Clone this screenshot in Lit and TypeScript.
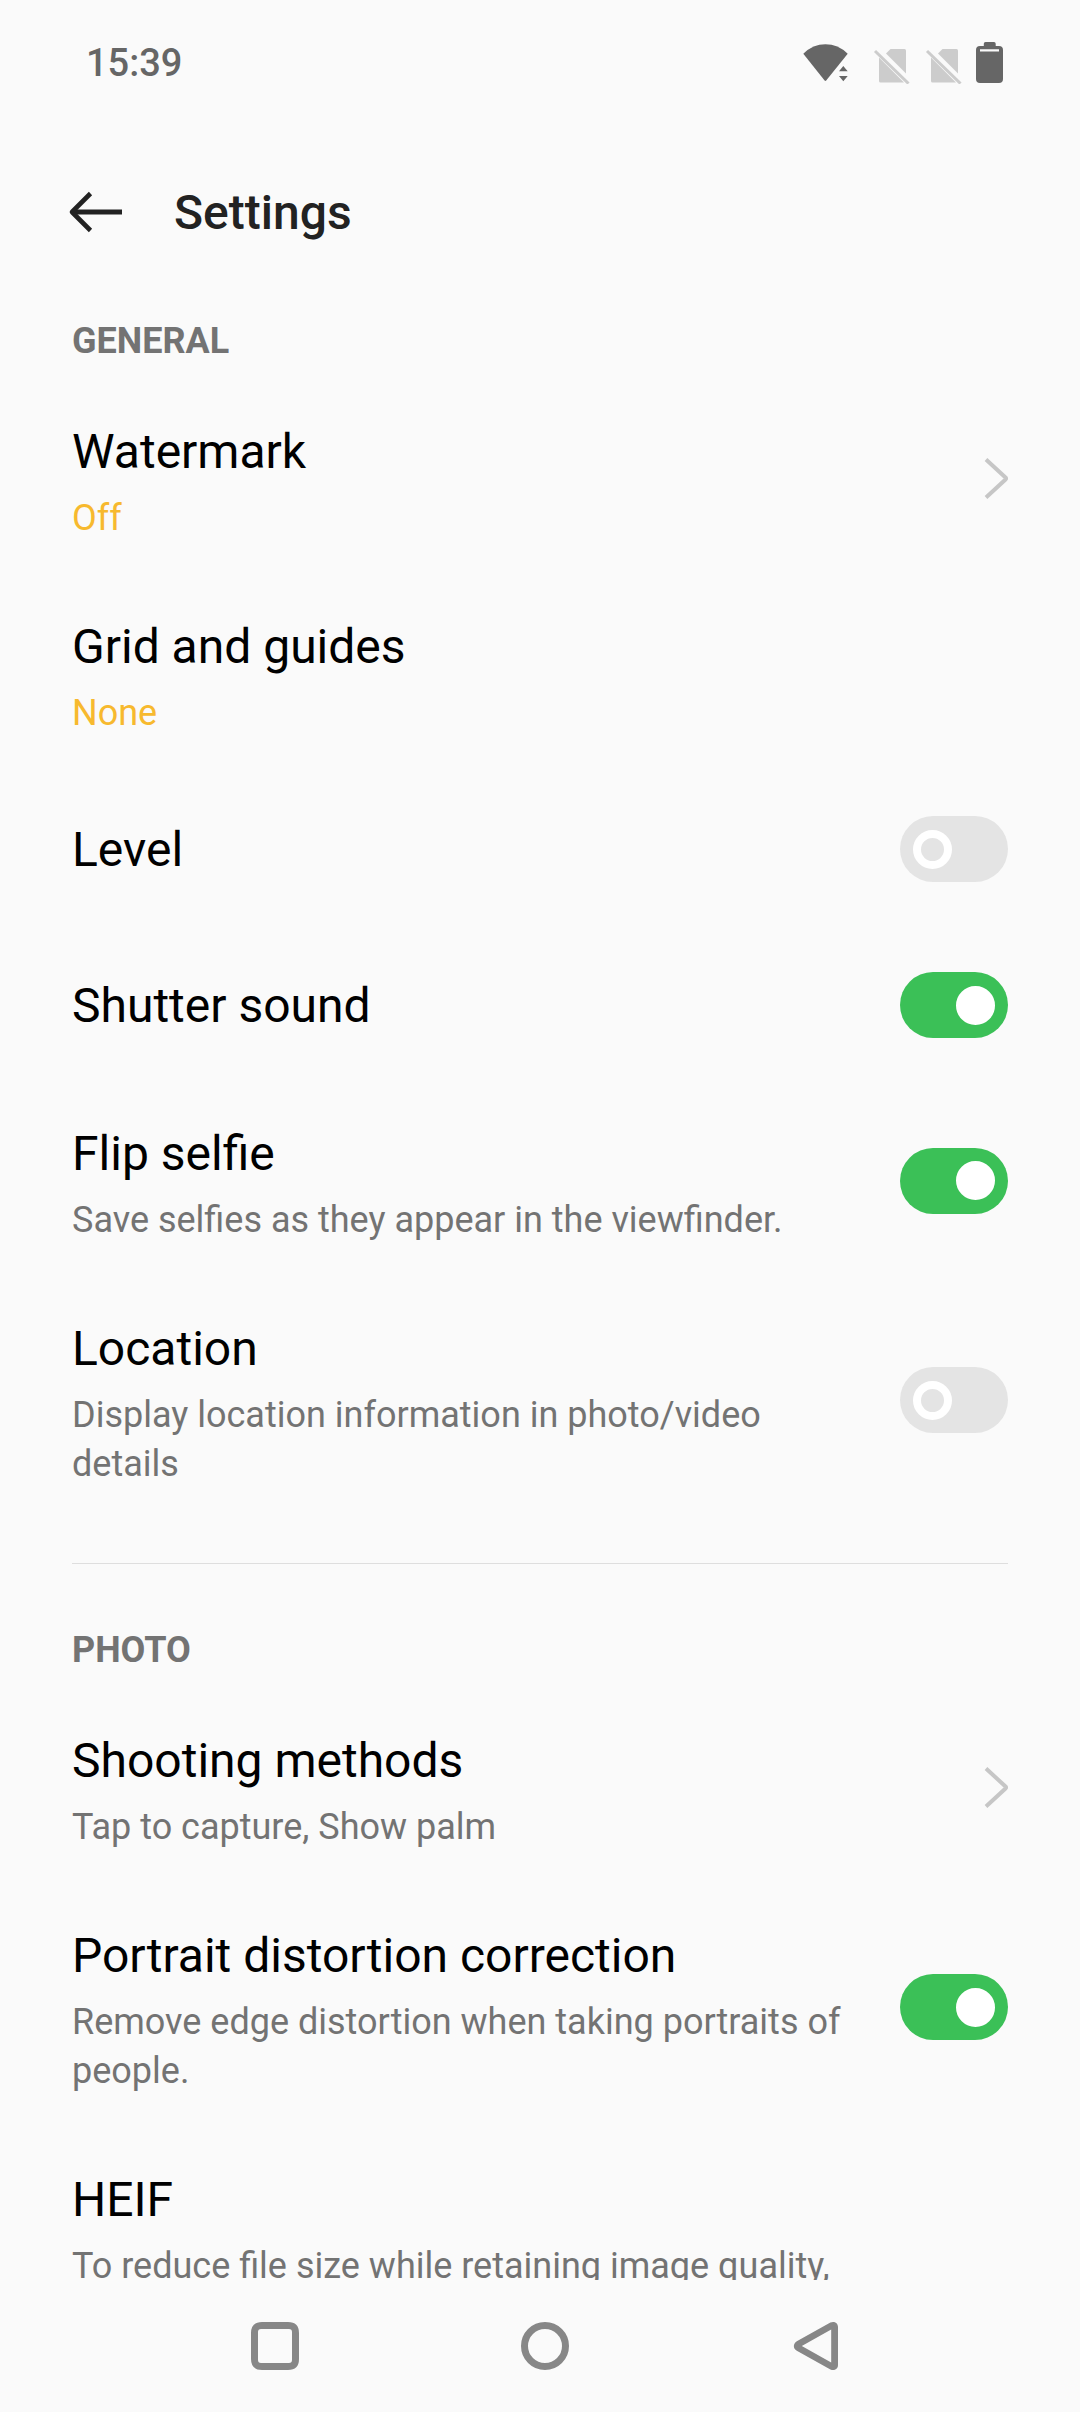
import { LitElement, html, css, svg, nothing } from "lit";
import { customElement, state } from "lit/decorators.js";

interface Item {
  id: string;
  title: string;
  note?: string;
  value?: string;
  kind: "link" | "menu" | "switch";
  on?: boolean;
}

interface Group {
  title: string;
  items: Item[];
}

const GROUPS: Group[] = [
  {
    title: "GENERAL",
    items: [
      { id: "watermark", title: "Watermark", value: "Off", kind: "link" },
      { id: "grid", title: "Grid and guides", value: "None", kind: "menu" },
      { id: "level", title: "Level", kind: "switch", on: false },
      { id: "shutter", title: "Shutter sound", kind: "switch", on: true },
      {
        id: "flip",
        title: "Flip selfie",
        note: "Save selfies as they appear in the viewfinder.",
        kind: "switch",
        on: true,
      },
      {
        id: "location",
        title: "Location",
        note: "Display location information in photo/video details",
        kind: "switch",
        on: false,
      },
    ],
  },
  {
    title: "PHOTO",
    items: [
      { id: "shooting", title: "Shooting methods", note: "Tap to capture, Show palm", kind: "link" },
      {
        id: "portrait",
        title: "Portrait distortion correction",
        note: "Remove edge distortion when taking portraits of people.",
        kind: "switch",
        on: true,
      },
      {
        id: "heif",
        title: "HEIF",
        note: "To reduce file size while retaining image quality,",
        kind: "menu",
      },
    ],
  },
];

// No-SIM glyph: card with a cut corner, crossed by a diagonal bar.
const sim = html`<svg class="icon sim" width="38" height="42" viewBox="0 0 38 42" aria-hidden="true">
  ${svg`
    <path d="M14 11.5 L18.5 7 H32.5 Q34 7 34 8.5 V31.5 Z" />
    <path d="M7 15.5 L32 40.5 H8.5 Q7 40.5 7 39 Z" />
    <path d="M3 9 L36.5 41.5" class="slash" />
  `}
</svg>`;

@customElement("app-root")
export class AppRoot extends LitElement {
  static styles = css`
    :host {
      display: flex;
      flex-direction: column;
      height: 100vh;
      background: #fafafa;
      color: #000;
      font-family: Roboto, "Liberation Sans", sans-serif;
      font-size: 36px;
      line-height: 49px;
    }
    button {
      border: 0;
      margin: 0;
      padding: 0;
      background: none;
      font: inherit;
      color: inherit;
      text-align: left;
      cursor: pointer;
    }
    svg {
      display: block;
      flex: none;
    }
    .status {
      display: flex;
      align-items: center;
      justify-content: space-between;
      height: 126px;
      padding: 0 77px 0 86px;
      color: #666;
    }
    .time {
      font-size: 38px;
      font-weight: 500;
    }
    .icons {
      display: flex;
      gap: 14px;
      fill: #666;
    }
    .sim {
      fill: #ccc;
    }
    .slash {
      fill: none;
      stroke: #ccc;
      stroke-width: 3;
    }
    .header {
      display: flex;
      align-items: center;
      gap: 48px;
      height: 171px;
      padding: 0 72px 0 66px;
      color: #222;
    }
    .line {
      fill: none;
      stroke: currentColor;
    }
    h1 {
      margin: 0;
      padding-top: 2px;
      font-size: 48px;
      font-weight: 500;
      line-height: 56px;
    }
    .list {
      flex: 1;
      min-height: 0;
      overflow-y: auto;
      scrollbar-width: none;
      padding: 20px 72px 0;
    }
    section + section {
      margin-top: 41px;
      padding-top: 62px;
      border-top: 1px solid #dedede;
    }
    h2 {
      margin: 0 0 15px;
      font-size: 36px;
      font-weight: 700;
      line-height: 49px;
      color: #737373;
    }
    .row {
      display: flex;
      align-items: center;
      gap: 45px;
      width: 100%;
      min-height: 156px;
      cursor: pointer;
    }
    .text {
      display: flex;
      flex: 1;
      flex-direction: column;
      gap: 14px;
      padding-top: 2px;
    }
    .text.double {
      padding: 43px 0 33px;
    }
    .title {
      font-size: 48px;
      line-height: 56px;
    }
    .note {
      color: #737373;
    }
    .value {
      color: #f7b92e;
    }
    .chevron {
      color: #c6c6c6;
    }
    .switch {
      appearance: none;
      display: flex;
      align-items: center;
      flex: none;
      box-sizing: border-box;
      width: 108px;
      height: 66px;
      margin: 0;
      padding: 0 13px;
      border-radius: 33px;
      background: #e4e4e4;
      cursor: pointer;
    }
    .switch::before {
      content: "";
      box-sizing: border-box;
      width: 39px;
      height: 39px;
      border: 8px solid #fff;
      border-radius: 50%;
    }
    .switch:checked {
      justify-content: flex-end;
      background: #3bc057;
    }
    .switch:checked::before {
      background: #fff;
    }
    .nav {
      display: flex;
      height: 132px;
      padding: 0 130px 0 140px;
      color: #878787;
    }
    .nav button {
      display: flex;
      flex: 1;
      align-items: center;
      justify-content: center;
    }
  `;

  @state() private on: Record<string, boolean> = Object.fromEntries(
    GROUPS.flatMap((g) => g.items).map((i) => [i.id, !!i.on]),
  );

  private toggle(id: string, e: Event) {
    this.on = { ...this.on, [id]: (e.target as HTMLInputElement).checked };
  }

  private renderText(item: Item) {
    const sub = item.note ?? item.value;
    return html`<span class="text ${sub ? "double" : ""}">
      <span class="title">${item.title}</span>
      ${sub ? html`<span class=${item.value ? "value" : "note"}>${sub}</span>` : nothing}
    </span>`;
  }

  private renderItem(item: Item) {
    if (item.kind === "switch") {
      return html`<label class="row" for=${item.id}>
        ${this.renderText(item)}
        <input
          class="switch"
          type="checkbox"
          role="switch"
          id=${item.id}
          .checked=${this.on[item.id]}
          @change=${(e: Event) => this.toggle(item.id, e)}
        />
      </label>`;
    }
    return html`<button class="row" type="button">
      ${this.renderText(item)}
      ${item.kind === "link"
        ? html`<svg class="chevron" width="24" height="42" viewBox="0 0 24 42" aria-hidden="true">
            <path class="line" d="M2 1.5 L21.5 19.5 Q22.5 20.5 21.5 21.5 L2 39.5" stroke-width="4" />
          </svg>`
        : nothing}
    </button>`;
  }

  render() {
    return html`
      <div class="status">
        <span class="time">15:39</span>
        <span class="icons">
          <svg class="icon" width="55" height="42" viewBox="0 0 55 42" aria-hidden="true">
            <path d="M0.3 11.7 Q10 2.3 22.4 2.3 Q35 2.3 44.7 11.7 L23.2 38.5 Q22.4 39.4 21.6 38.5 Z" />
            <path d="M36 29.3 L40.3 24 L44.7 29.3 Z M36 34 H44.7 L40.3 39.2 Z" />
          </svg>
          ${sim} ${sim}
          <svg class="icon" width="27" height="42" viewBox="0 0 27 42" aria-hidden="true">
            <path
              fill-rule="evenodd"
              d="M9.5 0 H18 Q19.7 0 19.7 1.7 V4 H23 Q27 4 27 8 V37 Q27 41 23 41 H4 Q0 41 0 37 V8 Q0 4 4 4 H7.8 V1.7 Q7.8 0 9.5 0 Z M4 7.2 V9.4 H23 V7.2 Z"
            />
          </svg>
        </span>
      </div>
      <header class="header">
        <button type="button" aria-label="Back">
          <svg width="60" height="42" viewBox="0 0 60 42" aria-hidden="true">
            <path class="line" d="M6 21 H56" stroke-width="5" />
            <path class="line" d="M24.5 2.5 L6 21 L24.5 39.5" stroke-width="4.6" stroke-linejoin="round" />
          </svg>
        </button>
        <h1>Settings</h1>
      </header>
      <main class="list">
        ${GROUPS.map(
          (g) => html`<section>
            <h2>${g.title}</h2>
            ${g.items.map((i) => this.renderItem(i))}
          </section>`,
        )}
      </main>
      <nav class="nav">
        <button type="button" aria-label="Recent apps">
          <svg width="60" height="60" viewBox="0 0 60 60" aria-hidden="true">
            <path
              fill="currentColor"
              fill-rule="evenodd"
              d="M17 6 H43 Q54 6 54 17 V43 Q54 54 43 54 H17 Q6 54 6 43 V17 Q6 6 17 6 Z M16 13 Q13 13 13 16 V44 Q13 47 16 47 H44 Q47 47 47 44 V16 Q47 13 44 13 Z"
            />
          </svg>
        </button>
        <button type="button" aria-label="Home">
          <svg width="60" height="60" viewBox="0 0 60 60" aria-hidden="true">
            <circle class="line" cx="30" cy="30" r="20.5" stroke-width="7" />
          </svg>
        </button>
        <button type="button" aria-label="Back">
          <svg width="60" height="60" viewBox="0 0 60 60" aria-hidden="true">
            <path
              fill="currentColor"
              fill-rule="evenodd"
              d="M45.4 6.5 C49 4.8 53 6.8 53 11 V49 C53 53.2 49 55.2 45.4 53.5 L11.8 34.8 C7.9 32.4 7.9 27.6 11.8 25.2 Z M46.2 13.6 L16.8 30 L46.2 46.4 Z"
            />
          </svg>
        </button>
      </nav>
    `;
  }
}
